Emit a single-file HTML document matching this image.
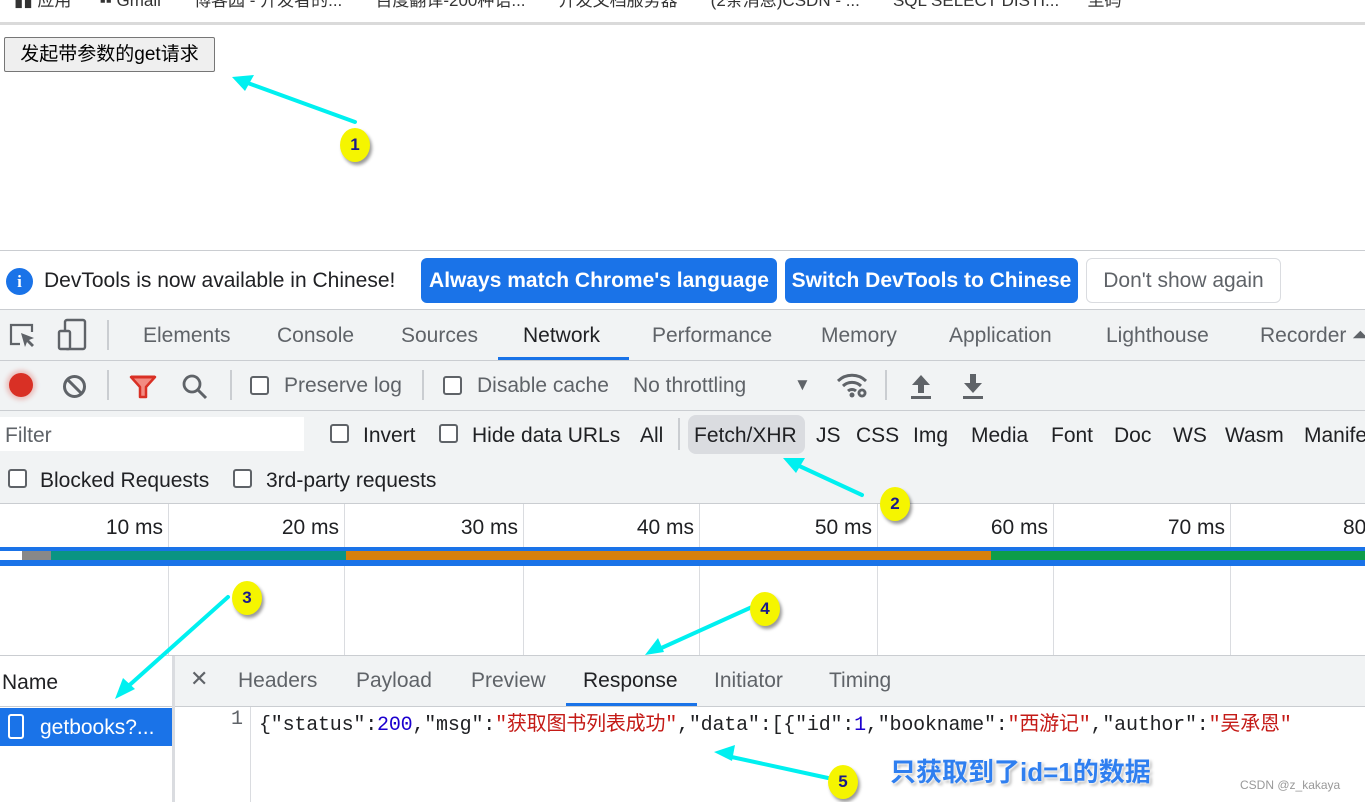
<!DOCTYPE html>
<html><head><meta charset="utf-8"><style>
*{margin:0;padding:0;box-sizing:border-box}
body{width:1365px;height:802px;overflow:hidden;position:relative;background:#fff;font-family:"Liberation Sans","Noto Sans CJK SC",sans-serif;color:#202124}
.a{position:absolute;white-space:nowrap}
.tab{font-size:21px;color:#5f6368;top:324px}
.ft{font-size:21px;color:#202124;top:424px}
.cb{position:absolute;width:19px;height:19px;border:2px solid #5f6368;border-radius:3px;background:#fff}
.ms{font-size:21px;top:516px;color:#202124}
.vl{position:absolute;width:1px;background:#dadce0}
.bt{font-size:21px;color:#5f6368;top:669px}
.badge{position:absolute;width:30px;height:34px;border-radius:50%;background:#f5f500;box-shadow:2px 3px 3px rgba(0,0,0,.4);font:bold 17px "Liberation Sans",sans-serif;color:#1a1a8a;text-align:center;line-height:34px}
</style></head><body>
<div class="a" style="top:-14px;left:14px;font-size:17px;color:#333">▮▮ 应用 &nbsp;&nbsp;&nbsp;&nbsp; ▪▪ Gmail &nbsp;&nbsp;&nbsp;&nbsp;&nbsp; 博客园 - 开发者的... &nbsp;&nbsp;&nbsp;&nbsp;&nbsp; 百度翻译-200种语... &nbsp;&nbsp;&nbsp;&nbsp;&nbsp; 开发文档服务器 &nbsp;&nbsp;&nbsp;&nbsp;&nbsp; (2条消息)CSDN - ... &nbsp;&nbsp;&nbsp;&nbsp;&nbsp; SQL SELECT DISTI... &nbsp;&nbsp;&nbsp;&nbsp; 至码</div>
<div class="a" style="top:22px;left:0;width:1365px;height:3px;background:#dadada"></div>
<div class="a" style="left:4px;top:37px;width:211px;height:35px;background:#efefef;border:1px solid #767676;border-radius:2px;font-size:19px;line-height:33px;text-align:center;color:#000">发起带参数的get请求</div>

<div class="a" style="top:250px;left:0;width:1365px;height:1px;background:#cacdd1"></div>
<div class="a" style="left:6px;top:268px;width:27px;height:27px;border-radius:50%;background:#1a73e8;color:#fff;font:bold 17px 'Liberation Serif',serif;text-align:center;line-height:27px">i</div>
<div class="a" style="left:44px;top:269px;font-size:21px;color:#202124">DevTools is now available in Chinese!</div>
<div class="a" style="left:421px;top:258px;width:356px;height:45px;background:#1a73e8;border-radius:6px;color:#fff;font-size:21px;font-weight:bold;line-height:46px;text-align:center">Always match Chrome's language</div>
<div class="a" style="left:785px;top:258px;width:293px;height:45px;background:#1a73e8;border-radius:6px;color:#fff;font-size:21px;font-weight:bold;line-height:46px;text-align:center">Switch DevTools to Chinese</div>
<div class="a" style="left:1086px;top:258px;width:195px;height:45px;background:#fff;border:1px solid #dadce0;border-radius:6px;color:#5f6368;font-size:21px;line-height:44px;text-align:center">Don't show again</div>

<div class="a" style="top:309px;left:0;width:1365px;height:251px;background:#f1f3f4"></div>
<div class="a" style="top:309px;left:0;width:1365px;height:1px;background:#cacdd1"></div>
<svg class="a" style="left:8px;top:320px" width="30" height="30" viewBox="0 0 30 30"><path d="M12 24H3V5h21v7" fill="none" stroke="#5f6368" stroke-width="2.2"/><path d="M13 13l13 5-5 2 5 5-2 2-5-5-2 5z" fill="#5f6368"/></svg>
<svg class="a" style="left:56px;top:318px" width="32" height="34" viewBox="0 0 32 34"><rect x="9" y="2" width="20" height="29" rx="2" fill="none" stroke="#5f6368" stroke-width="2.4"/><rect x="3" y="13" width="11" height="18" rx="1.5" fill="#f1f3f4" stroke="#5f6368" stroke-width="2.4"/></svg>
<div class="a" style="left:107px;top:320px;width:2px;height:30px;background:#cacdd1"></div>
<div class="a tab" style="left:143px">Elements</div>
<div class="a tab" style="left:277px">Console</div>
<div class="a tab" style="left:401px">Sources</div>
<div class="a tab" style="left:523px;color:#202124">Network</div>
<div class="a" style="left:498px;top:357px;width:131px;height:3px;background:#1a73e8"></div>
<div class="a tab" style="left:652px">Performance</div>
<div class="a tab" style="left:821px">Memory</div>
<div class="a tab" style="left:949px">Application</div>
<div class="a tab" style="left:1106px">Lighthouse</div>
<div class="a tab" style="left:1260px">Recorder ⏶</div>
<div class="a" style="top:360px;left:0;width:1365px;height:1px;background:#cacdd1"></div>

<div class="a" style="left:9px;top:373px;width:24px;height:24px;border-radius:50%;background:#d93025;box-shadow:0 0 4px 3px rgba(217,48,37,.25)"></div>
<svg class="a" style="left:62px;top:374px" width="25" height="25" viewBox="0 0 25 25"><circle cx="12.5" cy="12.5" r="10" fill="none" stroke="#5f6368" stroke-width="3"/><path d="M5.5 5.5l14 14" stroke="#5f6368" stroke-width="3"/></svg>
<div class="a" style="left:107px;top:370px;width:2px;height:30px;background:#cacdd1"></div>
<svg class="a" style="left:129px;top:375px" width="28" height="24" viewBox="0 0 28 24"><path d="M2 2h24l-9 10v10h-6V12z" fill="#f28b82" stroke="#d93025" stroke-width="2.5" stroke-linejoin="round"/><path d="M2 2h24" stroke="#d93025" stroke-width="3"/></svg>
<svg class="a" style="left:181px;top:373px" width="28" height="28" viewBox="0 0 28 28"><circle cx="11" cy="11" r="8" fill="none" stroke="#5f6368" stroke-width="2.8"/><path d="M17 17l8 8" stroke="#5f6368" stroke-width="3"/></svg>
<div class="a" style="left:230px;top:370px;width:2px;height:30px;background:#cacdd1"></div>
<div class="cb" style="left:250px;top:376px"></div>
<div class="a" style="left:284px;top:374px;font-size:21px;color:#5f6368">Preserve log</div>
<div class="a" style="left:422px;top:370px;width:2px;height:30px;background:#cacdd1"></div>
<div class="cb" style="left:443px;top:376px"></div>
<div class="a" style="left:477px;top:374px;font-size:21px;color:#5f6368">Disable cache</div>
<div class="a" style="left:633px;top:374px;font-size:21px;color:#5f6368">No throttling</div>
<div class="a" style="left:794px;top:375px;font-size:17px;color:#5f6368">▼</div>
<svg class="a" style="left:836px;top:372px" width="34" height="28" viewBox="0 0 34 28"><path d="M2 9a20 20 0 0 1 28 0M7 14a13 13 0 0 1 18 0M12 19a6 6 0 0 1 8 0" fill="none" stroke="#5f6368" stroke-width="3"/><circle cx="16" cy="23" r="2.5" fill="#5f6368"/><circle cx="26" cy="21" r="4.5" fill="#5f6368"/><circle cx="26" cy="21" r="1.6" fill="#f1f3f4"/></svg>
<div class="a" style="left:885px;top:370px;width:2px;height:30px;background:#cacdd1"></div>
<svg class="a" style="left:909px;top:373px" width="24" height="26" viewBox="0 0 24 26"><path d="M12 2L3 12h6v8h6v-8h6z M2 23h20v3H2z" fill="#5f6368"/></svg>
<svg class="a" style="left:961px;top:373px" width="24" height="26" viewBox="0 0 24 26"><path d="M9 1h6v9h6l-9 10-9-10h6z M2 23h20v3H2z" fill="#5f6368"/></svg>
<div class="a" style="top:410px;left:0;width:1365px;height:1px;background:#cacdd1"></div>

<div class="a" style="left:0;top:417px;width:304px;height:34px;background:#fff"></div>
<div class="a" style="left:5px;top:424px;font-size:21px;color:#5f6368">Filter</div>
<div class="cb" style="left:330px;top:424px"></div>
<div class="a ft" style="left:363px">Invert</div>
<div class="cb" style="left:439px;top:424px"></div>
<div class="a ft" style="left:472px">Hide data URLs</div>
<div class="a ft" style="left:640px">All</div>
<div class="a" style="left:678px;top:418px;width:2px;height:32px;background:#cacdd1"></div>
<div class="a" style="left:688px;top:415px;width:117px;height:39px;background:#dadce0;border-radius:8px"></div>
<div class="a ft" style="left:694px">Fetch/XHR</div>
<div class="a ft" style="left:816px">JS</div>
<div class="a ft" style="left:856px">CSS</div>
<div class="a ft" style="left:913px">Img</div>
<div class="a ft" style="left:971px">Media</div>
<div class="a ft" style="left:1051px">Font</div>
<div class="a ft" style="left:1114px">Doc</div>
<div class="a ft" style="left:1173px">WS</div>
<div class="a ft" style="left:1225px">Wasm</div>
<div class="a ft" style="left:1304px">Manifest</div>
<div class="cb" style="left:8px;top:469px"></div>
<div class="a" style="left:40px;top:469px;font-size:21px">Blocked Requests</div>
<div class="cb" style="left:233px;top:469px"></div>
<div class="a" style="left:266px;top:469px;font-size:21px">3rd-party requests</div>
<div class="a" style="top:503px;left:0;width:1365px;height:1px;background:#cacdd1"></div>

<div class="a" style="top:504px;left:0;width:1365px;height:151px;background:#fff"></div>
<div class="vl" style="left:168px;top:504px;height:151px"></div>
<div class="vl" style="left:344px;top:504px;height:151px"></div>
<div class="vl" style="left:523px;top:504px;height:151px"></div>
<div class="vl" style="left:699px;top:504px;height:151px"></div>
<div class="vl" style="left:877px;top:504px;height:151px"></div>
<div class="vl" style="left:1053px;top:504px;height:151px"></div>
<div class="vl" style="left:1230px;top:504px;height:151px"></div>
<div class="a ms" style="right:1202px">10 ms</div>
<div class="a ms" style="right:1026px">20 ms</div>
<div class="a ms" style="right:847px">30 ms</div>
<div class="a ms" style="right:671px">40 ms</div>
<div class="a ms" style="right:493px">50 ms</div>
<div class="a ms" style="right:317px">60 ms</div>
<div class="a ms" style="right:140px">70 ms</div>
<div class="a ms" style="left:1343px">80 ms</div>
<div class="a" style="top:547px;left:0;width:1365px;height:19px;background:#1a73e8"></div>
<div class="a" style="top:551px;left:0;width:22px;height:9px;background:#fff"></div>
<div class="a" style="top:551px;left:22px;width:29px;height:9px;background:#888"></div>
<div class="a" style="top:551px;left:51px;width:295px;height:9px;background:#0a9483"></div>
<div class="a" style="top:551px;left:346px;width:645px;height:9px;background:#d6800c"></div>
<div class="a" style="top:551px;left:991px;width:374px;height:9px;background:#0d9d4a"></div>

<div class="a" style="top:655px;left:0;width:1365px;height:1px;background:#cacdd1"></div>
<div class="a" style="top:656px;left:0;width:1365px;height:50px;background:#f1f3f4"></div>
<div class="a" style="top:656px;left:0;width:172px;height:146px;background:#fff"></div>
<div class="a" style="top:706px;left:0;width:1365px;height:1px;background:#cacdd1"></div>
<div class="a" style="top:656px;left:172px;width:3px;height:146px;background:#dadce0"></div>
<div class="a" style="left:2px;top:671px;font-size:21px">Name</div>
<div class="a" style="top:708px;left:0;width:172px;height:38px;background:#1a73e8"></div>
<div class="a" style="left:8px;top:714px;width:16px;height:25px;border:2px solid #fff;border-radius:3px"></div>
<div class="a" style="left:40px;top:716px;font-size:21px;color:#fff">getbooks?...</div>
<div class="a" style="left:190px;top:666px;font-size:22px;color:#5f6368">✕</div>
<div class="a bt" style="left:238px">Headers</div>
<div class="a bt" style="left:356px">Payload</div>
<div class="a bt" style="left:471px">Preview</div>
<div class="a bt" style="left:583px;color:#202124">Response</div>
<div class="a" style="left:566px;top:703px;width:131px;height:3px;background:#1a73e8"></div>
<div class="a bt" style="left:714px">Initiator</div>
<div class="a bt" style="left:829px">Timing</div>
<div class="a" style="top:707px;left:250px;width:1px;height:95px;background:#dadce0"></div>
<div class="a" style="left:231px;top:708px;font:20px 'Liberation Mono',monospace;color:#5f6368">1</div>
<div class="a" style="left:259px;top:707px;font:20px 'Liberation Mono','Noto Sans CJK SC',monospace;color:#202124;letter-spacing:-0.2px">{"status":<span style="color:#1c00cf">200</span>,"msg":<span style="color:#c41a16">"获取图书列表成功"</span>,"data":[{"id":<span style="color:#1c00cf">1</span>,"bookname":<span style="color:#c41a16">"西游记"</span>,"author":<span style="color:#c41a16">"吴承恩"</span></div>

<svg class="a" style="left:0;top:0" width="1365" height="802">
<g stroke="#00f0f0" stroke-width="4" fill="#00f0f0" stroke-linecap="round">
<line x1="355" y1="122" x2="245" y2="82"/><path d="M232 77l22-2-9 16z" stroke="none"/>
<line x1="862" y1="495" x2="795" y2="464"/><path d="M783 458l22 0-9 15z" stroke="none"/>
<line x1="228" y1="597" x2="124" y2="690"/><path d="M115 699l8-21 12 11z" stroke="none"/>
<line x1="752" y1="607" x2="657" y2="650"/><path d="M645 655l13-17 6 14z" stroke="none"/>
<line x1="828" y1="778" x2="727" y2="756"/><path d="M714 752l21-7-3 16z" stroke="none"/>
</g></svg>
<div class="badge" style="left:340px;top:128px">1</div>
<div class="badge" style="left:880px;top:487px">2</div>
<div class="badge" style="left:232px;top:581px">3</div>
<div class="badge" style="left:750px;top:592px">4</div>
<div class="badge" style="left:828px;top:765px">5</div>
<div class="a" style="left:890px;top:752px;font-size:26px;font-weight:bold;color:#2f7ff0;text-shadow:1px 1px 2px #fff,-1px -1px 2px #fff,2px 2px 3px #999">只获取到了id=1的数据</div>
<div class="a" style="left:1240px;top:778px;font-size:12px;color:#999">CSDN @z_kakaya</div>
</body></html>
